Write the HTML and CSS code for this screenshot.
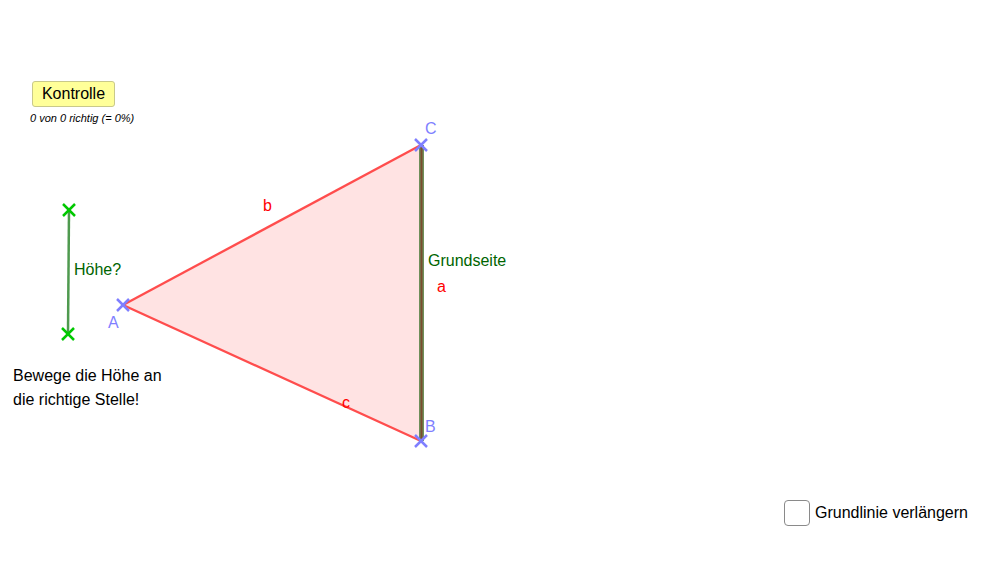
FILE: index.html
```html
<!DOCTYPE html>
<html>
<head>
<meta charset="utf-8">
<link rel="stylesheet" href="styles.css">
</head>
<body>
<div class="applet">
  <svg class="board" width="993" height="566" viewBox="0 0 993 566">
    <polygon points="123,305 421,145 421,441" fill="#ffe3e3"/>
    <line x1="123" y1="305" x2="421" y2="145" stroke="#ff4d4d" stroke-width="2.3"/>
    <line x1="123" y1="305" x2="421" y2="441" stroke="#ff4d4d" stroke-width="2.3"/>
    <line x1="421.5" y1="145" x2="421.5" y2="441" stroke="#6f8f5a" stroke-width="5"/>
    <line x1="421.5" y1="145" x2="421.5" y2="441" stroke="#7a4c2e" stroke-width="2"/>
    <line x1="69" y1="210" x2="68" y2="334" stroke="#4f9a4f" stroke-width="2.5"/>
    <g stroke="#00c800" stroke-width="2.5">
      <line x1="63" y1="204" x2="75" y2="216"/><line x1="75" y1="204" x2="63" y2="216"/>
      <line x1="62" y1="328" x2="74" y2="340"/><line x1="74" y1="328" x2="62" y2="340"/>
    </g>
    <g stroke="#7f7fff" stroke-width="2.5">
      <line x1="117" y1="299" x2="129" y2="311"/><line x1="129" y1="299" x2="117" y2="311"/>
      <line x1="415" y1="139" x2="427" y2="151"/><line x1="427" y1="139" x2="415" y2="151"/>
      <line x1="415" y1="435" x2="427" y2="447"/><line x1="427" y1="435" x2="415" y2="447"/>
    </g>
    <g class="lbl">
      <text x="108" y="328" fill="#7f7fff">A</text>
      <text x="425" y="134" fill="#7f7fff">C</text>
      <text x="425" y="432" fill="#7f7fff">B</text>
      <text x="263" y="211" fill="#ff0000">b</text>
      <text x="437" y="292" fill="#ff0000">a</text>
      <text x="342" y="408" fill="#ff0000">c</text>
      <text x="428" y="266" fill="#006400">Grundseite</text>
      <text x="74" y="275" fill="#006400">Höhe?</text>
    </g>
  </svg>
  <div class="kontrolle">
    <button class="btn">Kontrolle</button>
    <div class="score">0 von 0 richtig (= 0%)</div>
  </div>
  <div class="hint">Bewege die Höhe an<br>die richtige Stelle!</div>
  <label class="check"><span class="box"></span>Grundlinie verlängern</label>
</div>
</body>
</html>
```

FILE: styles.css
```css
html, body {
  margin: 0;
  padding: 0;
  background: #ffffff;
}
.applet {
  position: relative;
  width: 993px;
  height: 566px;
  overflow: hidden;
  font-family: "Liberation Sans", Arial, sans-serif;
  color: #000;
}
.board {
  position: absolute;
  left: 0;
  top: 0;
}
.lbl text {
  font-family: "Liberation Sans", Arial, sans-serif;
  font-size: 16px;
}
.kontrolle {
  position: absolute;
  left: 30px;
  top: 81px;
  display: flex;
  flex-direction: column;
  align-items: flex-start;
}
.btn {
  margin-left: 2px;
  width: 83px;
  height: 26px;
  padding: 0;
  background: #ffff99;
  border: 1px solid #c9c98a;
  border-radius: 3px;
  font-family: "Liberation Sans", Arial, sans-serif;
  font-size: 16px;
  color: #000;
}
.score {
  margin-top: 5px;
  font-size: 11px;
  font-style: italic;
}
.hint {
  position: absolute;
  left: 13px;
  top: 364px;
  font-size: 16px;
  line-height: 24px;
}
.check {
  position: absolute;
  left: 784px;
  top: 499px;
  display: flex;
  align-items: center;
  gap: 5px;
  font-size: 16px;
}
.box {
  width: 24px;
  height: 24px;
  border: 1px solid #8a8a8a;
  border-radius: 4px;
  background: #fff;
}
.check {
  padding-top: 1px;
}
```
